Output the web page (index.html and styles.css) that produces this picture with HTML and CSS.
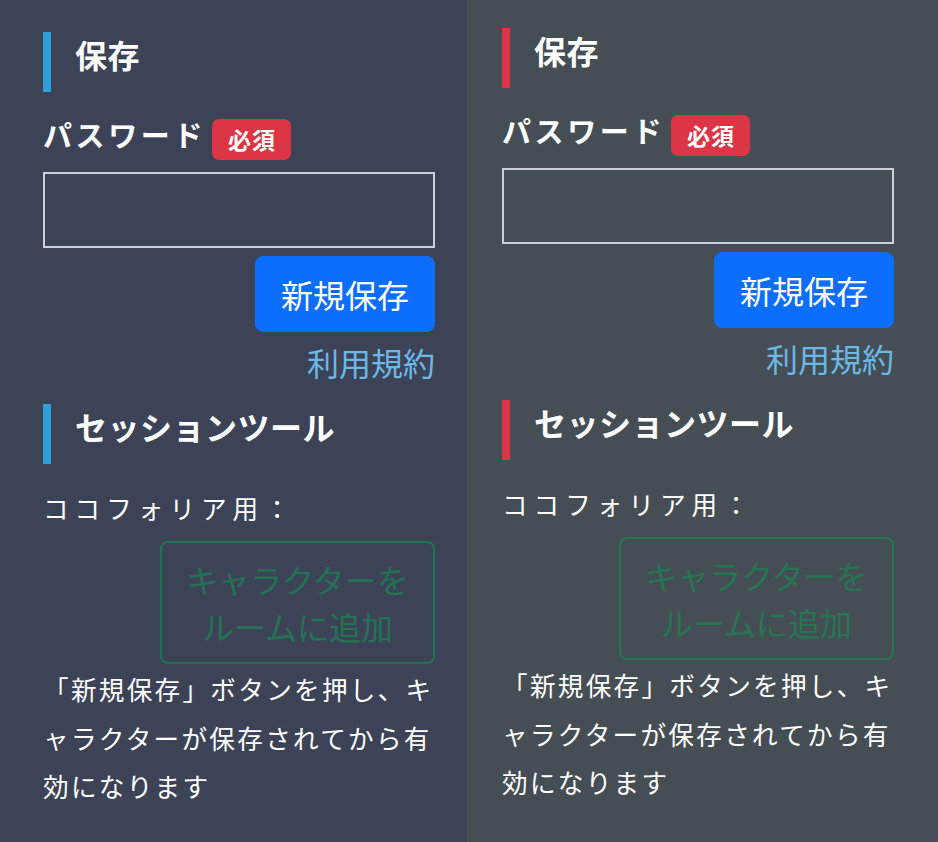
FILE: index.html
```html
<!DOCTYPE html>
<html lang="ja">
<head>
<meta charset="utf-8">
<title>保存</title>
<link rel="stylesheet" href="styles.css">
</head>
<body>
<div class="page">
  <section class="panel panel-a">
    <h2 class="heading">保存</h2>
    <div class="field-row">
      <label class="field-label">パスワード</label>
      <span class="badge">必須</span>
    </div>
    <input class="field-input" type="password">
    <div class="btn-row">
      <button class="btn btn-primary">新規保存</button>
    </div>
    <a class="terms" href="#">利用規約</a>
    <h2 class="heading heading-2">セッションツール</h2>
    <p class="tool-label">ココフォリア用：</p>
    <div class="btn-row btn-row-green">
      <button class="btn btn-outline" disabled>キャラクターを<br>ルームに追加</button>
    </div>
    <p class="note">「新規保存」ボタンを押し、キ<br>ャラクターが保存されてから有<br>効になります</p>
  </section>
  <section class="panel panel-b">
    <h2 class="heading">保存</h2>
    <div class="field-row">
      <label class="field-label">パスワード</label>
      <span class="badge">必須</span>
    </div>
    <input class="field-input" type="password">
    <div class="btn-row">
      <button class="btn btn-primary">新規保存</button>
    </div>
    <a class="terms" href="#">利用規約</a>
    <h2 class="heading heading-2">セッションツール</h2>
    <p class="tool-label">ココフォリア用：</p>
    <div class="btn-row btn-row-green">
      <button class="btn btn-outline" disabled>キャラクターを<br>ルームに追加</button>
    </div>
    <p class="note">「新規保存」ボタンを押し、キ<br>ャラクターが保存されてから有<br>効になります</p>
  </section>
</div>
</body>
</html>
```

FILE: styles.css
```css
html, body {
  margin: 0;
  padding: 0;
}
body {
  font-family: "Noto Sans CJK JP", "Noto Sans", sans-serif;
  color: #ffffff;
  width: 938px;
  height: 842px;
  overflow: hidden;
}
.page {
  display: grid;
  grid-template-columns: 467px 471px;
  height: 842px;
}
.panel {
  box-sizing: border-box;
  display: flex;
  flex-direction: column;
}
.panel-a {
  background: #3d4356;
  padding: 32px 32px 0 43px;
}
.panel-b {
  background: #464e55;
  padding: 28px 44px 0 35px;
}
.heading {
  margin: 0;
  box-sizing: border-box;
  height: 60px;
  border-left: 8px solid #2d9fd9;
  padding: 2px 0 0 24px;
  font-size: 32px;
  line-height: 40px;
  font-weight: 700;
  letter-spacing: 0.5px;
}
.panel-b .heading {
  border-left-color: #dc3545;
}
.heading-2 {
  margin-top: 18px;
}
.field-row {
  display: flex;
  align-items: center;
  gap: 6px;
  margin-top: 27px;
  height: 41px;
}
.field-label {
  font-size: 29px;
  font-weight: 700;
  letter-spacing: 3.6px;
  line-height: 41px;
  margin-bottom: 10px;
}
.badge {
  background: #dc3545;
  color: #ffffff;
  font-size: 23px;
  font-weight: 700;
  letter-spacing: 1px;
  line-height: 41px;
  height: 41px;
  padding: 0 15px 0 16px;
  border-radius: 7px;
}
.field-input {
  display: block;
  box-sizing: border-box;
  width: 100%;
  height: 76px;
  margin: 12px 0 0;
  border: 2px solid #ccd0d6;
  background: transparent;
  outline: none;
}
.btn-row {
  display: flex;
  justify-content: flex-end;
  margin-top: 8px;
}
.btn {
  font-family: inherit;
  font-size: 32px;
  line-height: 48px;
  padding: 12.8px 25.6px;
  border-radius: 8px;
  letter-spacing: 0;
  cursor: pointer;
}
.btn-primary {
  background: #0d6efd;
  border: 1.6px solid #0d6efd;
  color: #ffffff;
  width: 180px;
  height: 76px;
  box-sizing: border-box;
  padding: 0;
}
.terms {
  display: block;
  text-align: right;
  margin-top: 6px;
  font-size: 32px;
  line-height: 48px;
  color: #6cb8e6;
  text-decoration: none;
}
.tool-label {
  margin: 20px 0 0;
  font-size: 25.6px;
  letter-spacing: 6px;
  line-height: 48.5px;
}
.btn-row-green {
  margin-top: 8.5px;
}
.btn-outline {
  background: transparent;
  border: 2px solid #198754;
  color: #198754;
  opacity: 0.7;
  width: 275px;
  line-height: 47px;
  padding: 12.5px 0;
  box-sizing: border-box;
}
.note {
  margin: 1px 0 0;
  font-size: 25.6px;
  letter-spacing: 2.3px;
  line-height: 48.5px;
}
```
